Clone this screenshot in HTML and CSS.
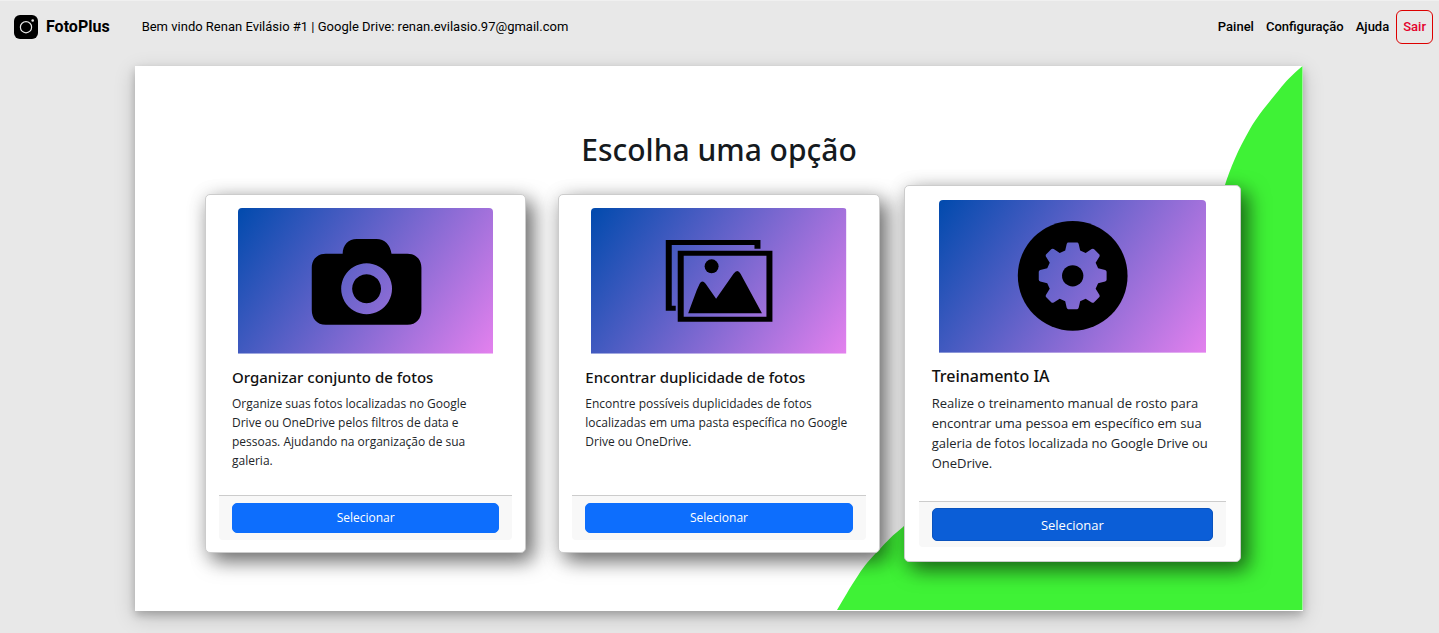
FILE: index.html
```html
<!DOCTYPE html>
<html lang="pt-BR">
<head>
<meta charset="utf-8">
<meta name="viewport" content="width=device-width, initial-scale=1">
<title>FotoPlus</title>
<link rel="stylesheet" href="styles.css">
</head>
<body>
<header class="navbar">
  <a class="brand" href="#">
    <svg class="brand-icon" viewBox="0 0 24 24" aria-hidden="true">
      <rect width="24" height="24" rx="6" fill="#000"/>
      <circle cx="12" cy="12.200" r="5.600" fill="none" stroke="#e8e8e8" stroke-width="1.200"/>
      <circle cx="18.700" cy="5.500" r="1.300" fill="#e8e8e8"/>
    </svg>
    <span>FotoPlus</span>
  </a>
  <p class="welcome">Bem vindo Renan Evilásio #1 | Google Drive: renan.evilasio.97@gmail.com</p>
  <nav class="menu">
    <a class="menu-link" href="#">Painel</a>
    <a class="menu-link" href="#">Configuração</a>
    <a class="menu-link" href="#">Ajuda</a>
  </nav>
  <button class="logout" type="button">Sair</button>
</header>

<main class="panel">
  <svg class="panel-art" viewBox="0 0 1168 545" preserveAspectRatio="xMaxYMax slice" aria-hidden="true">
    <path d="M1167.500 0C1157 9 1151 15 1144 24C1130 41 1122 51 1115 63C1103 84 1096 100 1089 122L768 461C758 469 752 475 745 483C735 493 729 500 724 508C714 523 708 534 702 544H1167.500Z" fill="#3ff236"/>
  </svg>
  <h1 class="title">Escolha uma opção</h1>
  <div class="cards">
    <article class="card">
      <svg class="card-image" viewBox="0 0 256 146" preserveAspectRatio="xMidYMid slice" aria-hidden="true">
        <defs>
          <linearGradient id="sky" gradientUnits="userSpaceOnUse" x1="6" y1="-10" x2="250" y2="156">
            <stop offset="0" stop-color="#004aad"/><stop offset="1" stop-color="#e481ee"/>
          </linearGradient>
        </defs>
        <rect width="256" height="146" fill="url(#sky)"/>
        <path fill-rule="evenodd" d="M88 46H105C105 37 111 31 119 31H139C147 31 153 37 154 46H170C179 46 184 52 184 60V102C184 111 179 117 170 117H88C79 117 74 111 74 102V60C74 52 79 46 88 46ZM129 55.500a25.500 25.500 0 1 0 .01 0ZM129 66.500a14.500 14.500 0 1 1-.01 0Z"/>
      </svg>
      <div class="card-body">
        <h2 class="card-title">Organizar conjunto de fotos</h2>
        <p class="card-text">Organize suas fotos localizadas no Google Drive ou OneDrive pelos filtros de data e pessoas. Ajudando na organização de sua galeria.</p>
      </div>
      <div class="card-footer"><button class="select" type="button">Selecionar</button></div>
    </article>
    <article class="card">
      <svg class="card-image" viewBox="0 0 256 146" preserveAspectRatio="xMidYMid slice" aria-hidden="true">
        <rect width="256" height="146" fill="url(#sky)"/>
        <path d="M75 32H170V41H164V37H81V98H85V103H75Z"/>
        <path fill-rule="evenodd" d="M87 43H182V114H87ZM93 48V109H176V48Z"/>
        <circle cx="121" cy="58.500" r="7"/>
        <path d="M97.500 105.500C102 94 105 84 109 76Q111.500 71.500 115 76L125.500 91L143 66Q147 60.500 150 66L171.500 105.500Z"/>
      </svg>
      <div class="card-body">
        <h2 class="card-title">Encontrar duplicidade de fotos</h2>
        <p class="card-text">Encontre possíveis duplicidades de fotos localizadas em uma pasta específica no Google Drive ou OneDrive.</p>
      </div>
      <div class="card-footer"><button class="select" type="button">Selecionar</button></div>
    </article>
    <article class="card card-active">
      <svg class="card-image" viewBox="0 0 268 153" preserveAspectRatio="xMidYMid slice" aria-hidden="true">
        <defs>
          <linearGradient id="sky-large" gradientUnits="userSpaceOnUse" x1="7" y1="-11" x2="261" y2="164">
            <stop offset="0" stop-color="#004aad"/><stop offset="1" stop-color="#e481ee"/>
          </linearGradient>
        </defs>
        <rect width="268" height="153" fill="url(#sky-large)"/>
        <circle cx="134" cy="76" r="55"/>
        <path fill="url(#sky-large)" d="M129.500 42.500H138.500Q139.500 42.500 140 44L141.500 50.500L147 53L153 49.200Q154.500 48.300 155.500 49.300L160.500 54.500Q161.500 55.500 160.700 57L157 63L159.500 68.500L166.500 70.200Q168 70.600 168 72V80Q168 81.300 166.500 81.700L159.500 83.500L157 89L160.700 95Q161.500 96.500 160.500 97.500L155.500 102.500Q154.500 103.500 153 102.700L147 99L141.500 101.500L140 108Q139.500 109.500 138.500 109.500H129.500Q128.500 109.500 128 108L126.500 101.500L121 99L115 102.700Q113.500 103.500 112.500 102.500L107.500 97.500Q106.500 96.500 107.300 95L111 89L108.500 83.500L101.500 81.700Q100 81.300 100 80V72Q100 70.600 101.500 70.200L108.500 68.500L111 63L107.300 57Q106.500 55.500 107.500 54.500L112.500 49.300Q113.500 48.300 115 49.200L121 53L126.500 50.500L128 44Q128.500 42.500 129.500 42.500Z"/>
        <circle cx="134" cy="76" r="10.700"/>
      </svg>
      <div class="card-body">
        <h2 class="card-title">Treinamento IA</h2>
        <p class="card-text">Realize o treinamento manual de rosto para encontrar uma pessoa em específico em sua galeria de fotos localizada no Google Drive ou OneDrive.</p>
      </div>
      <div class="card-footer"><button class="select" type="button">Selecionar</button></div>
    </article>
  </div>
</main>
</body>
</html>
```
FILE: styles.css
```css
* {
  box-sizing: border-box;
}

body {
  margin: 0;
  background: #e8e8e8;
  color: #212529;
  font-family: "Open Sans", "Noto Sans", sans-serif;
}

h1, h2, p {
  margin: 0;
}

.navbar {
  display: flex;
  align-items: center;
  padding: 9px 6px 0 14px;
  border-top: 1px solid #f0f0f0;
  color: #000;
  font: 400 13px/20px Roboto, sans-serif;
}

.brand {
  display: flex;
  align-items: center;
  gap: 8px;
  color: #000;
  font-size: 16px;
  font-weight: 700;
  text-decoration: none;
}

.brand-icon {
  width: 24px;
  height: 24px;
}

.welcome {
  margin-left: 32px;
}

.menu {
  display: flex;
  gap: 12px;
  margin-left: auto;
}

.menu-link {
  color: #000;
  font-weight: 500;
  text-decoration: none;
}

.logout {
  height: 34px;
  margin-left: 7px;
  padding: 0 6px;
  border: 1px solid #dd0000;
  border-radius: 6px;
  background: transparent;
  color: #e4002b;
  font: 500 13px/20px Roboto, sans-serif;
}

.panel {
  position: relative;
  margin: 22px 136px 22px 135px;
  padding: 64px 70px 58px;
  background: #fff;
  box-shadow: 0 4px 8px rgba(0, 0, 0, 0.2), 0 6px 20px rgba(0, 0, 0, 0.19);
}

.panel-art {
  position: absolute;
  inset: 0;
  width: 100%;
  height: 100%;
}

.title {
  position: relative;
  margin-bottom: 24px;
  color: #151a1e;
  font-family: "Noto Sans", "Open Sans", sans-serif;
  font-size: 30px;
  font-weight: 500;
  line-height: 40px;
  text-align: center;
}

.cards {
  position: relative;
  display: grid;
  grid-template-columns: repeat(3, 1fr);
  gap: 32px;
}

.card {
  display: flex;
  flex-direction: column;
  min-height: 359px;
  padding: 13px 13px 12px;
  border: 1px solid #ccc;
  border-radius: 5px;
  background: #fff;
  box-shadow: 0 4px 20px rgba(0, 0, 0, 0.19), 8px 8px 20px rgba(0, 0, 0, 0.5);
}

.card-image {
  display: block;
  width: 87%;
  margin: 0 auto;
  border-radius: 4px 4px 0 0;
}

.card-body {
  flex: 1;
  padding: 13px;
}

.card-title {
  margin-bottom: 7px;
  color: #111;
  font-family: "Noto Sans", "Open Sans", sans-serif;
  font-size: 15px;
  font-weight: 500;
  line-height: 20px;
}

.card-text {
  padding-right: 4px;
  font-size: 12px;
  line-height: 19px;
}

.card-footer {
  padding: 7px 13px;
  border-top: 1px solid #ccc;
  border-radius: 0 0 4px 4px;
  background: #f8f8f8;
}

.select {
  display: block;
  width: 100%;
  height: 30px;
  border: 1px solid #0d6efd;
  border-radius: 5px;
  background: #0d6efd;
  color: #fff;
  font: 400 12px/18px "Open Sans", "Noto Sans", sans-serif;
}

.card-active {
  margin: -9px -8px;
  padding: 14px;
}

.card-active .card-title {
  font-size: 16px;
}

.card-active .card-text {
  font-size: 13px;
  line-height: 20px;
}

.card-active .card-footer {
  padding: 6px 13px;
}

.card-active .select {
  height: 33px;
  border-color: #0a53be;
  background: #0b5ed7;
  font-size: 13px;
}
```
